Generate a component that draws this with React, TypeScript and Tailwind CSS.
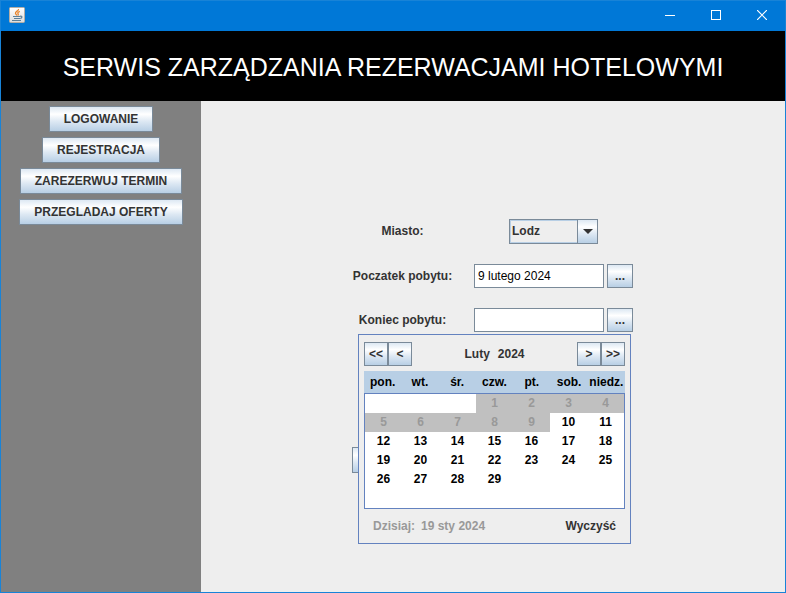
import type { ButtonHTMLAttributes, ReactNode } from "react";
import clsx from "clsx";

const DAY_NAMES = ["pon.", "wt.", "śr.", "czw.", "pt.", "sob.", "niedz."];
const CITIES = ["Lodz", "Warszawa", "Krakow"];
const FIRST_WEEKDAY = 3;
const DAYS_IN_MONTH = 29;
const LAST_DISABLED_DAY = 9;

const WEEKS: (number | null)[][] = Array.from({ length: 6 }, (_, week) =>
  Array.from({ length: 7 }, (_, col) => {
    const day = week * 7 + col - FIRST_WEEKDAY + 1;
    return day >= 1 && day <= DAYS_IN_MONTH ? day : null;
  }),
);

function MetalButton({ className, children, ...rest }: ButtonHTMLAttributes<HTMLButtonElement>) {
  return (
    <button
      type="button"
      className={clsx(
        "flex items-center justify-center border border-[#7a8a99] bg-[linear-gradient(#dde8f3_0%,#ffffff_30%,#dde8f3_60%,#b8cfe5_100%)] font-bold text-[#333333]",
        className,
      )}
      {...rest}
    >
      {children}
    </button>
  );
}

function JavaIcon() {
  return (
    <svg width="16" height="16" viewBox="0 0 16 16" aria-hidden="true">
      <defs>
        <linearGradient id="tile" x1="0" y1="0" x2="0" y2="1">
          <stop offset="0" stopColor="#ffffff" />
          <stop offset="1" stopColor="#dcdcdc" />
        </linearGradient>
      </defs>
      <rect x="0.5" y="0.5" width="15" height="15" rx="1" fill="url(#tile)" stroke="#b4aea6" />
      <path d="M9.500 2c.5 2-3.500 2.300-3 4.300.2.900 1.100 1.200 1.300 2.200M10.800 4.300c-1.800.7-2.400 1.500-1.700 2.500.4.600.1 1.200-.4 1.700" fill="none" stroke="#e8832a" strokeWidth="1.300" />
      <path d="M4 9.500h7M5 11.500h6M3 13.500h9M11 9.300c2.600-.6 2.400 1.600.3 2.300" fill="none" stroke="#5c8099" strokeWidth="1.200" />
    </svg>
  );
}

function TitleBar() {
  const control = "flex h-7 w-[46px] items-center justify-center text-white";
  return (
    <div className="flex h-[30px] items-center justify-between bg-[#0078d7] pb-0.5 pl-2">
      <JavaIcon />
      <div className="flex">
        <button type="button" aria-label="Minimalizuj" className={control}>
          <svg width="10" height="10" viewBox="0 0 10 10" shapeRendering="crispEdges">
            <path d="M0 5.500h10" stroke="currentColor" />
          </svg>
        </button>
        <button type="button" aria-label="Maksymalizuj" className={control}>
          <svg width="10" height="10" viewBox="0 0 10 10" shapeRendering="crispEdges">
            <rect x="0.5" y="0.5" width="9" height="9" fill="none" stroke="currentColor" />
          </svg>
        </button>
        <button type="button" aria-label="Zamknij" className={control}>
          <svg width="10" height="10" viewBox="0 0 10 10">
            <path d="M0 0l10 10M10 0L0 10" stroke="currentColor" strokeWidth="1.200" />
          </svg>
        </button>
      </div>
    </div>
  );
}

function Calendar() {
  return (
    <div className="absolute top-full right-0.5 mt-0.5 w-[273px] border border-[#6382bf] bg-[#eeeeee] px-[5px] pt-[7px]">
      <div className="flex items-center justify-between">
        <div className="flex">
          <MetalButton className="size-6" aria-label="Poprzedni rok">&lt;&lt;</MetalButton>
          <MetalButton className="size-6" aria-label="Poprzedni miesiąc">&lt;</MetalButton>
        </div>
        <div className="flex gap-2 font-bold text-[#333333]">
          <span>Luty</span>
          <span>2024</span>
        </div>
        <div className="flex">
          <MetalButton className="size-6" aria-label="Następny miesiąc">&gt;</MetalButton>
          <MetalButton className="size-6" aria-label="Następny rok">&gt;&gt;</MetalButton>
        </div>
      </div>
      <table className="mt-[5px] w-full table-fixed border-separate border-spacing-0 text-center font-bold text-black">
        <thead>
          <tr className="h-[22px] bg-[#b8cfe5]">
            {DAY_NAMES.map((name) => (
              <th key={name} scope="col" className="p-0 whitespace-nowrap">
                {name}
              </th>
            ))}
          </tr>
        </thead>
      </table>
      <div className="border border-[#6382bf] bg-white">
        <table className="w-full table-fixed border-separate border-spacing-0 text-center font-bold text-black">
          <tbody>
            {WEEKS.map((week, row) => (
              <tr key={row} className="h-[19px]">
                {week.map((day, col) => (
                  <td
                    key={col}
                    className={clsx(
                      "p-0",
                      day !== null && day <= LAST_DISABLED_DAY && "bg-[#c0c0c0] text-[#999999]",
                    )}
                  >
                    {day}
                  </td>
                ))}
              </tr>
            ))}
          </tbody>
        </table>
      </div>
      <div className="flex h-[34px] items-center justify-between px-[9px] font-bold">
        <span className="flex gap-[6px] text-[#999999]">
          <span>Dzisiaj:</span>
          <span>19 sty 2024</span>
        </span>
        <button type="button" className="text-[#333333]">Wyczyść</button>
      </div>
    </div>
  );
}

function DateField({ id, value, children }: { id: string; value: string; children?: ReactNode }) {
  return (
    <div className="relative flex gap-[3px]">
      <input
        id={id}
        type="text"
        defaultValue={value}
        className="h-6 w-[130px] border border-[#7a8a99] bg-white px-[3px] text-black outline-none"
      />
      <MetalButton className="h-6 w-[26px]" aria-label="Wybierz datę">...</MetalButton>
      {children}
    </div>
  );
}

export default function App() {
  return (
    <div className="flex min-h-screen flex-col border border-[#1883d7] bg-[#eeeeee] font-['Liberation_Sans',Arial,sans-serif] text-[12px] leading-4">
      <TitleBar />
      <header className="flex h-[70px] items-center justify-center bg-black pt-0.5 text-white">
        <h1 className="text-[25px] leading-8 whitespace-nowrap">SERWIS ZARZĄDZANIA REZERWACJAMI HOTELOWYMI</h1>
      </header>
      <div className="flex flex-1">
        <nav className="flex w-[200px] shrink-0 flex-col items-center gap-[5px] bg-[#808080] pt-[5px]">
          <MetalButton className="h-[26px] px-[14px]">LOGOWANIE</MetalButton>
          <MetalButton className="h-[26px] px-[14px]">REJESTRACJA</MetalButton>
          <MetalButton className="h-[26px] px-[14px]">ZAREZERWUJ TERMIN</MetalButton>
          <MetalButton className="h-[26px] px-[14px]">PRZEGLADAJ OFERTY</MetalButton>
        </nav>
        <main className="flex flex-1 items-center justify-center pr-px pb-0.5">
          <form className="grid grid-cols-[101px_159px] items-center justify-items-center gap-x-[21px] gap-y-5">
            <label htmlFor="city" className="font-bold text-[#333333]">Miasto:</label>
            <div className="relative flex h-[25px] w-[89px] border border-[#7a8a99]">
              <select
                id="city"
                className="w-full appearance-none border border-r-[20px] border-[#b8cfe5] bg-[#eeeeee] pl-px font-bold text-[#333333] outline-none"
              >
                {CITIES.map((city) => (
                  <option key={city}>{city}</option>
                ))}
              </select>
              <span className="pointer-events-none absolute inset-y-0 right-0 flex w-5 items-center justify-center border-l border-[#7a8a99] bg-[linear-gradient(#dde8f3_0%,#ffffff_30%,#dde8f3_60%,#b8cfe5_100%)]">
                <svg width="10" height="5" viewBox="0 0 10 5" aria-hidden="true">
                  <path d="M0 0h10L5 5z" fill="#333333" />
                </svg>
              </span>
            </div>
            <label htmlFor="start" className="font-bold text-[#333333]">Poczatek pobytu:</label>
            <DateField id="start" value="9 lutego 2024" />
            <label htmlFor="end" className="font-bold text-[#333333]">Koniec pobytu:</label>
            <DateField id="end" value="">
              <Calendar />
            </DateField>
            <MetalButton className="mt-[95px] h-[26px] w-full" aria-label="Zarezerwuj" />
          </form>
        </main>
      </div>
    </div>
  );
}
